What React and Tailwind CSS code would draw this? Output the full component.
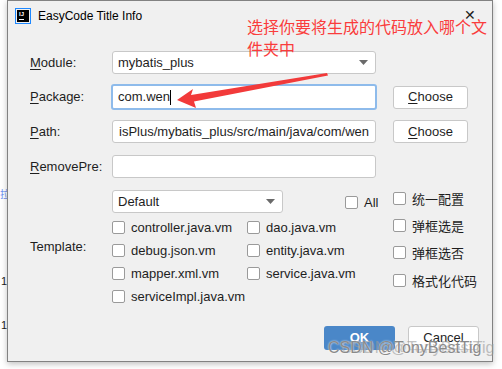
import React from "react";

const font = { fontFamily: '"Liberation Sans", Arial, "Noto Sans CJK SC", sans-serif' };

function Box() {
  return <span className="inline-block w-[13px] h-[13px] bg-white border border-[#9a9a9a] rounded-[2px] shrink-0" />;
}

function Check({ label, className = "" }) {
  return (
    <div className={"flex items-center gap-[6px] " + className}>
      <Box />
      <span className="text-[13px] text-[#1e1e1e] whitespace-nowrap leading-none">{label}</span>
    </div>
  );
}

function Mnemonic({ first, rest }) {
  return (
    <span>
      <span className="underline underline-offset-2 decoration-[1px]">{first}</span>
      {rest}
    </span>
  );
}

function Caret() {
  return (
    <svg width="9" height="5" viewBox="0 0 9 5" className="shrink-0">
      <path d="M0 0 H9 L4.5 5 Z" fill="#6a6a6a" />
    </svg>
  );
}

function ChooseBtn() {
  return (
    <button className="w-[75px] h-[23px] bg-white border border-[#c8c8c8] rounded-[3px] text-[13px] text-[#1e1e1e] flex items-center justify-center">
      <Mnemonic first="C" rest="hoose" />
    </button>
  );
}

export default function App() {
  return (
    <div className="relative w-[502px] h-[369px] bg-white overflow-hidden" style={font}>
      {/* things behind the dialog */}
      <div className="absolute left-0 top-[189px] text-[10px] text-[#6b8ff0] leading-none" style={{ fontFamily: '"Noto Sans CJK SC", sans-serif' }}>拉</div>
      <div className="absolute left-[1px] top-[276px] text-[11px] text-[#222] leading-none">1</div>
      <div className="absolute left-[1px] top-[320px] text-[11px] text-[#222] leading-none">1</div>

      <div className="pl-[7px]">
        <div className="relative w-[486px] h-[362px] bg-[#f0f0f0] border border-[#828282] shadow-[0_2px_6px_rgba(0,0,0,0.25)] flex flex-col">
          {/* title bar */}
          <div className="h-[30px] flex items-center pl-[7px] pr-[16px] shrink-0">
            <div className="w-[16px] h-[16px] border border-[#1e88ff] p-[1px]">
              <div className="w-full h-full bg-black flex flex-col items-start pl-[2px] pt-[1px]">
                <span className="text-white text-[6px] font-bold leading-[7px]">IJ</span>
                <span className="mt-[1px] w-[5px] h-[1px] bg-white" />
              </div>
            </div>
            <span className="ml-[7px] text-[12px] text-black">EasyCode Title Info</span>
            <span className="ml-auto -mt-[3px] text-[#222] text-[14px] leading-none font-light">✕</span>
          </div>

          {/* form */}
          <div className="pl-[22px] mt-[20px] flex flex-col">
            <div className="flex items-center h-[23px]">
              <span className="w-[82px] text-[13px] text-[#1e1e1e]"><Mnemonic first="M" rest="odule:" /></span>
              <div className="w-[264px] h-[23px] bg-white border border-[#c8c8c8] rounded-[3px] flex items-center pl-[5px] pr-[7px]">
                <span className="text-[13px] text-[#1e1e1e]">mybatis_plus</span>
                <span className="ml-auto"><Caret /></span>
              </div>
            </div>

            <div className="flex items-center h-[26px] mt-[10px]">
              <span className="w-[81px] text-[13px] text-[#1e1e1e]"><Mnemonic first="P" rest="ackage:" /></span>
              <div className="w-[266px] h-[26px] bg-white border-2 border-[#8ebbeb] rounded-[3px] flex items-center pl-[5px]">
                <span className="text-[13px] text-[#1e1e1e]">com.wen</span>
                <span className="w-[1px] h-[15px] bg-black" />
              </div>
              <div className="ml-[16px]"><ChooseBtn /></div>
            </div>

            <div className="flex items-center h-[23px] mt-[10px]">
              <span className="w-[82px] text-[13px] text-[#1e1e1e]"><Mnemonic first="P" rest="ath:" /></span>
              <div className="w-[264px] h-[23px] bg-white border border-[#c8c8c8] rounded-[3px] flex items-center justify-end pr-[6px] overflow-hidden">
                <span className="text-[13px] text-[#1e1e1e] whitespace-nowrap">isPlus/mybatis_plus/src/main/java/com/wen</span>
              </div>
              <div className="ml-[17px]"><ChooseBtn /></div>
            </div>

            <div className="flex items-center h-[23px] mt-[12px]">
              <span className="w-[82px] text-[13px] text-[#1e1e1e]"><Mnemonic first="R" rest="emovePre:" /></span>
              <div className="w-[264px] h-[23px] bg-white border border-[#c8c8c8] rounded-[3px]" />
            </div>

            {/* template */}
            <div className="flex mt-[7px]">
              <div className="w-[82px] flex items-center">
                <span className="text-[13px] text-[#1e1e1e]">Template:</span>
              </div>
              <div className="w-[281px] pt-[5px]">
                <div className="flex items-center h-[23px]">
                  <div className="w-[171px] h-[23px] bg-white border border-[#c8c8c8] rounded-[3px] flex items-center pl-[5px] pr-[7px]">
                    <span className="text-[13px] text-[#1e1e1e]">Default</span>
                    <span className="ml-auto"><Caret /></span>
                  </div>
                  <Check label="All" className="ml-[62px] mt-[2px]" />
                </div>
                <div className="grid grid-cols-[135px_1fr] mt-[3px]">
                  <Check label="controller.java.vm" className="h-[23px]" />
                  <Check label="dao.java.vm" className="h-[23px]" />
                  <Check label="debug.json.vm" className="h-[23px]" />
                  <Check label="entity.java.vm" className="h-[23px]" />
                  <Check label="mapper.xml.vm" className="h-[23px]" />
                  <Check label="service.java.vm" className="h-[23px]" />
                  <Check label="serviceImpl.java.vm" className="h-[23px]" />
                </div>
              </div>
              <div className="flex flex-col" style={{ fontFamily: '"Noto Sans CJK SC", sans-serif' }}>
                <Check label="统一配置" className="h-[27px]" />
                <Check label="弹框选是" className="h-[27px]" />
                <Check label="弹框选否" className="h-[27px]" />
                <Check label="格式化代码" className="h-[29px]" />
              </div>
            </div>
          </div>

          {/* buttons */}
          <div className="mt-auto mb-[11px] flex justify-end gap-[13px] pr-[13px]">
            <button className="w-[71px] h-[24px] bg-[#4a87c8] rounded-[3px] text-white text-[13px] font-bold">OK</button>
            <button className="w-[71px] h-[24px] bg-white border border-[#c8c8c8] rounded-[3px] text-[13px] text-[#1e1e1e]">Cancel</button>
          </div>
        </div>
      </div>

      {/* annotation overlay */}
      <div className="absolute left-[247px] top-[15px] w-[242px] text-[16px] leading-[22px] text-[#fa3c3c]" style={{ fontFamily: '"Noto Sans CJK SC", sans-serif' }}>
        选择你要将生成的代码放入哪个文件夹中
      </div>
      <svg className="absolute left-0 top-0 pointer-events-none" width="502" height="369">
        <polygon points="177,100 193,89 191,95 327,73 328,75.5 194,101.5 196,108" fill="#f23a3a" />
      </svg>

      {/* watermark */}
      <div className="absolute left-[341px] top-[340px] text-[16px] text-[#9a9a9a] opacity-60 whitespace-nowrap leading-none">CSDN @TonyBestTig</div>
      <div className="absolute left-[328px] top-[340px] text-[16px] text-[#8a8a8a] whitespace-nowrap leading-none [text-shadow:0_0_2px_#fff]">CSDN @TonyBestTig</div>
    </div>
  );
}
